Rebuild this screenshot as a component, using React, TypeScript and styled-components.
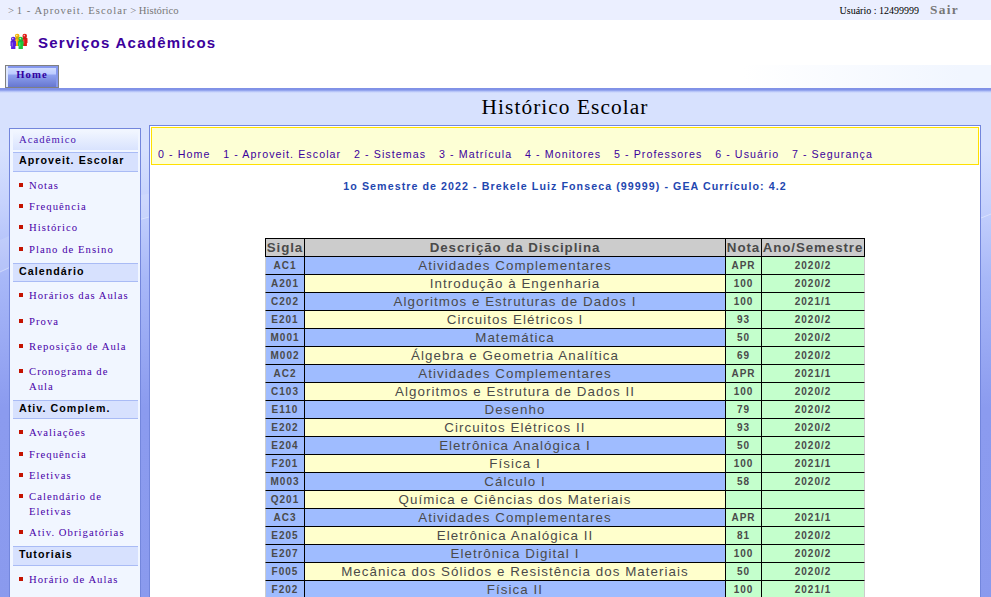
import React from 'react';
import styled, { createGlobalStyle } from 'styled-components';

const sans = '"Liberation Sans", Arial, sans-serif';
const serif = '"Liberation Serif", "Times New Roman", serif';

const GlobalStyle = createGlobalStyle`
  *, *::before, *::after { box-sizing: border-box; }
  body { margin: 0; overflow: hidden; background: #fff; font-family: ${serif}; }
  a { color: inherit; text-decoration: none; }
`;

const Page = styled.div`
  height: 597px;
  overflow: hidden;
  display: flex;
  flex-direction: column;
`;

const TopBar = styled.header`
  flex: none;
  height: 20px;
  background: #ebefff;
  display: flex;
  justify-content: space-between;
  padding: 0 32px 0 8px;
  font-size: 10.67px;
  line-height: 20px;
  color: #777;
  white-space: pre;
`;

const Trail = styled.a`
  letter-spacing: 1.05px;
`;

const Session = styled.div`
  display: flex;
  font-size: 10px;
  line-height: 22px;
  color: #000;
`;

const Logout = styled.a`
  margin-left: 11px;
  font-size: 13.33px;
  font-weight: bold;
  letter-spacing: 1.33px;
  line-height: 20px;
  color: #777;
`;

const Brand = styled.div`
  flex: none;
  height: 45px;
  display: flex;
  padding-left: 10px;
  svg { margin-top: 13px; flex: none; }
`;

const BrandName = styled.h1`
  margin: 0 0 0 10px;
  font: bold 15px/46px ${sans};
  letter-spacing: 1.26px;
  color: #3c009c;
`;

const TabStrip = styled.nav`
  flex: none;
  height: 23px;
  padding-left: 5px;
  background: linear-gradient(90deg, #fff 75%, #f1f6ff 97%);
`;

const Tab = styled.a`
  display: block;
  width: 54px;
  height: 23px;
  border: 1px solid #808080;
  background: linear-gradient(90deg, #dce6ff 2px, transparent 2px, transparent 50px, #8598ee 50px),
    linear-gradient(#8598ee 2px, #d0dcff 2px, #bccbff 8px, #8fa2ef 9px, #6373ce 22px);
  text-align: center;
  font-size: 10.67px;
  font-weight: bold;
  line-height: 16px;
  letter-spacing: 1.1px;
  color: #3300a0;
`;

const Canvas = styled.div`
  position: relative;
  flex: 1;
  background: linear-gradient(#8090e6 0, #8294e8 2px, #a8b8f5 3px, #c4d0fb 4px, transparent 5px),
    linear-gradient(#d7e1fe 0, #d7e1fe 60px, #c6d2fd 115px, #a8b8f8 190px, #8b9bef 320px, #8a9aee 100%);
`;

const Swoosh = styled.svg`
  position: absolute;
  left: 0;
  top: 0;
`;

const PageTitle = styled.h2`
  position: relative;
  margin: 0;
  height: 37px;
  padding-left: 139px;
  text-align: center;
  font: 21.33px/38px ${serif};
  letter-spacing: 1.07px;
  color: #000;
`;

const Columns = styled.div`
  position: relative;
  display: grid;
  grid-template-columns: 132px 832px;
  gap: 8px;
  padding-left: 9px;
`;

const Sidebar = styled.aside`
  margin-top: 3px;
  height: 500px;
  padding: 2px 2px 0 3px;
  border: 1px solid #7386dc;
  background: #f1f6ff;
`;

const Section = styled.a`
  display: block;
  height: 19px;
  margin-bottom: 2px;
  padding-left: 6px;
  background: linear-gradient(#f1f6ff, #d9e3fe);
  font-size: 10.67px;
  line-height: 17px;
  letter-spacing: 1.05px;
  color: #4a14b0;
`;

const GroupTitle = styled.h3<{ $tall?: boolean }>`
  margin: 0;
  height: ${p => (p.$tall ? 20 : 19)}px;
  padding-left: 6px;
  border: solid #a9bbf5;
  border-width: 1px 0;
  background: #d7e1fe;
  font: bold 10.67px/14px ${sans};
  letter-spacing: 1.05px;
  color: #000;
`;

const Links = styled.ul`
  list-style: none;
  margin: 0;
  padding: 0 0 6px;
`;

const LinkItem = styled.li<{ $gap: number }>`
  display: flex;
  margin-top: ${p => p.$gap}px;
  padding-left: 6px;
  font-size: 10.67px;
  line-height: 15px;
  letter-spacing: 1.04px;
  color: #4800a8;
  white-space: pre-line;
  &::before {
    content: '';
    flex: none;
    width: 4px;
    height: 4px;
    margin: 5px 6px 0 0;
    background: #c41200;
  }
`;

const Panel = styled.main`
  height: 500px;
  padding: 1px;
  border: 1px solid #7386dc;
  background: #fff;
`;

const Menu = styled.nav`
  display: flex;
  align-items: flex-end;
  gap: 12.75px;
  height: 38px;
  padding: 0 0 2px 6px;
  border: 1px solid #ffe000;
  background: #fdffd5;
  font: 10.67px/16px ${sans};
  letter-spacing: 1.08px;
  color: #3c009c;
  white-space: nowrap;
`;

const Summary = styled.p`
  margin: 13px 0 0;
  height: 60px;
  text-align: center;
  font: bold 10.67px/16px ${sans};
  letter-spacing: 1.07px;
  color: #1f47b0;
`;

const Grades = styled.table`
  width: 600px;
  margin: 0 0 0 114px;
  table-layout: fixed;
  border-collapse: separate;
  border-spacing: 0;
  font-family: ${sans};
  letter-spacing: 1px;
  color: #4a4a4a;
  text-align: center;
  white-space: nowrap;
`;

const Head = styled.th`
  height: 19px;
  padding: 0;
  border: solid #000;
  border-width: 1px 1px 1px 0;
  background: #ccc;
  font-size: 13.33px;
  line-height: 17px;
  letter-spacing: 0.91px;
  &:first-child { border-left-width: 1px; }
`;

const Cell = styled.td<{ $bg: string; $large?: boolean }>`
  height: 18px;
  padding: 0;
  border: solid #000;
  border-width: 0 1px 1px 0;
  background: ${p => p.$bg};
  font-size: ${p => (p.$large ? 13.33 : 10)}px;
  font-weight: ${p => (p.$large ? 'normal' : 'bold')};
  letter-spacing: ${p => (p.$large ? 1.07 : 1)}px;
  line-height: 17px;
  &:first-child { border-left: 1px solid #ccc; }
  &:last-child { border-right-color: #ccc; }
`;

const people = [
  { x: 4.5, y: 0.5, fill: '#f0b400' },
  { x: 12, y: 0.5, fill: '#e01a12' },
  { x: 0.5, y: 3.5, fill: '#5a20e0' },
  { x: 8, y: 3.5, fill: '#1cc83c' },
];

const PeopleIcon = () => (
  <svg width="18" height="17" viewBox="0 0 18 17">
    {people.map(p => (
      <g key={p.fill} transform={`translate(${p.x} ${p.y})`}>
        <path d="M0 5.3Q0 4.3 1 4.3H4.5Q5.5 4.3 5.5 5.3V9.5H4.9V12.5H.6V9.5H0Z" fill={p.fill} />
        <circle cx="2.75" cy="2.5" r="2.3" fill={p.fill} />
        <path d="M.8 4.5h3.9" stroke="#222" strokeOpacity=".35" strokeWidth=".6" />
        <circle cx="2.3" cy="2.1" r=".8" fill="#fff" opacity=".7" />
        <path d="M1.8 6v4" stroke="#fff" strokeOpacity=".35" />
      </g>
    ))}
  </svg>
);

type Group = { title: string; tall?: boolean; links: [string, number][] };
const groups: Group[] = [
  { title: 'Aproveit. Escolar', tall: true, links: [['Notas', 6], ['Frequência', 6], ['Histórico', 6], ['Plano de Ensino', 7]] },
  { title: 'Calendário', links: [['Horários das Aulas', 6], ['Prova', 11], ['Reposição de Aula', 10], ['Cronograma de\nAula', 10]] },
  { title: 'Ativ. Complem.', links: [['Avaliações', 6], ['Frequência', 7], ['Eletivas', 6], ['Calendário de\nEletivas', 6], ['Ativ. Obrigatórias', 6]] },
  { title: 'Tutoriais', tall: true, links: [['Horário de Aulas', 6]] },
];

const menu = ['0 - Home', '1 - Aproveit. Escolar', '2 - Sistemas', '3 - Matrícula', '4 - Monitores', '5 - Professores', '6 - Usuário', '7 - Segurança'];

const grades = [
  ['AC1', 'Atividades Complementares', 'APR', '2020/2'],
  ['A201', 'Introdução à Engenharia', '100', '2020/2'],
  ['C202', 'Algoritmos e Estruturas de Dados I', '100', '2021/1'],
  ['E201', 'Circuitos Elétricos I', '93', '2020/2'],
  ['M001', 'Matemática', '50', '2020/2'],
  ['M002', 'Álgebra e Geometria Analítica', '69', '2020/2'],
  ['AC2', 'Atividades Complementares', 'APR', '2021/1'],
  ['C103', 'Algoritmos e Estrutura de Dados II', '100', '2020/2'],
  ['E110', 'Desenho', '79', '2020/2'],
  ['E202', 'Circuitos Elétricos II', '93', '2020/2'],
  ['E204', 'Eletrônica Analógica I', '50', '2020/2'],
  ['F201', 'Física I', '100', '2021/1'],
  ['M003', 'Cálculo I', '58', '2020/2'],
  ['Q201', 'Química e Ciências dos Materiais', '', ''],
  ['AC3', 'Atividades Complementares', 'APR', '2021/1'],
  ['E205', 'Eletrônica Analógica II', '81', '2020/2'],
  ['E207', 'Eletrônica Digital I', '100', '2020/2'],
  ['F005', 'Mecânica dos Sólidos e Resistência dos Materiais', '50', '2020/2'],
  ['F202', 'Física II', '100', '2021/1'],
];

export default function App() {
  return (
    <Page>
      <GlobalStyle />
      <TopBar>
        <div>&gt; <Trail href="#">1 - Aproveit. Escolar</Trail> &gt; Histórico</div>
        <Session>Usuário : 12499999<Logout href="#">Sair</Logout></Session>
      </TopBar>
      <Brand>
        <PeopleIcon />
        <BrandName>Serviços Acadêmicos</BrandName>
      </Brand>
      <TabStrip><Tab href="#">Home</Tab></TabStrip>
      <Canvas>
        <Swoosh width="991" height="509" viewBox="0 0 991 509">
          <path d="M0 152Q80 115 160 104L150 128Q70 148 0 184Z" fill="#fff" opacity=".12" />
          <path d="M0 184Q70 148 160 126M981 130L991 126" fill="none" stroke="#fff" opacity=".4" />
        </Swoosh>
        <PageTitle>Histórico Escolar</PageTitle>
        <Columns>
          <Sidebar>
            <Section href="#">Acadêmico</Section>
            {groups.map(g => (
              <React.Fragment key={g.title}>
                <GroupTitle $tall={g.tall}>{g.title}</GroupTitle>
                <Links>
                  {g.links.map(([label, gap]) => <LinkItem key={label} $gap={gap}><a href="#">{label}</a></LinkItem>)}
                </Links>
              </React.Fragment>
            ))}
          </Sidebar>
          <Panel>
            <Menu>{menu.map(m => <a key={m} href="#">{m}</a>)}</Menu>
            <Summary>1o Semestre de 2022 - Brekele Luiz Fonseca (99999) - GEA Currículo: 4.2</Summary>
            <Grades>
              <colgroup><col width="40" /><col width="421" /><col width="36" /><col width="103" /></colgroup>
              <thead><tr><Head>Sigla</Head><Head>Descrição da Disciplina</Head><Head>Nota</Head><Head>Ano/Semestre</Head></tr></thead>
              <tbody>
                {grades.map(([code, name, grade, term], i) => (
                  <tr key={code}>
                    <Cell $bg="#9fbcff">{code}</Cell>
                    <Cell $large $bg={i % 2 ? '#ffffcc' : '#9fbcff'}>{name}</Cell>
                    <Cell $bg="#c4ffcc">{grade}</Cell>
                    <Cell $bg="#c4ffcc">{term}</Cell>
                  </tr>
                ))}
              </tbody>
            </Grades>
          </Panel>
        </Columns>
      </Canvas>
    </Page>
  );
}
